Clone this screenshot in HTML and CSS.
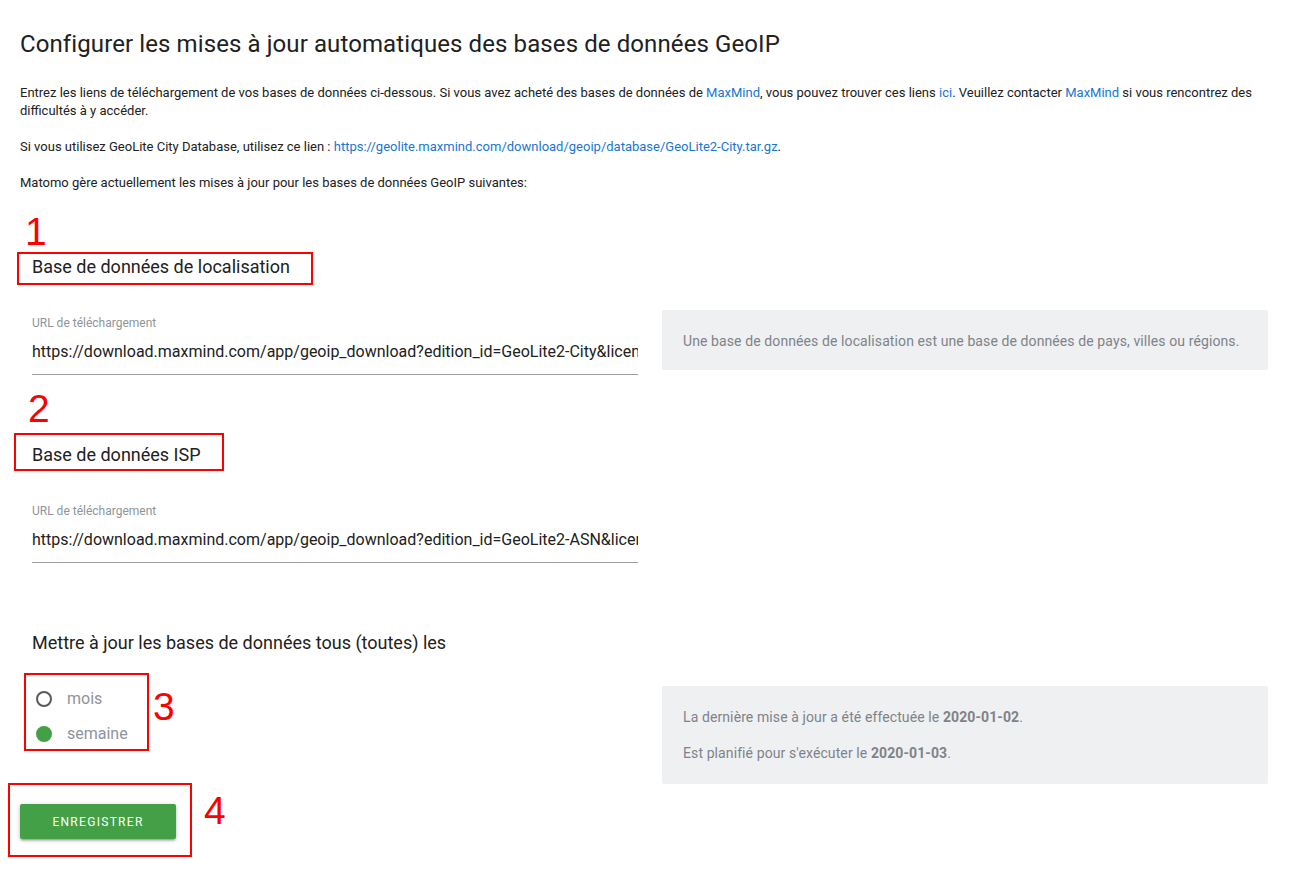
FILE: index.html
```html
<!DOCTYPE html>
<html lang="fr">

<head>
    <meta charset="UTF-8">
    <meta name="viewport" content="width=device-width, initial-scale=1.0">
    <title>GeoIP</title>
    <link rel="stylesheet" href="styles.css">
</head>

<body>
    <div class="page">
        <h2 class="title">Configurer les mises à jour automatiques des bases de données GeoIP</h2>

        <p class="intro">Entrez les liens de téléchargement de vos bases de données ci-dessous. Si vous avez acheté des bases de données de <a href="#">MaxMind</a>, vous pouvez trouver ces liens <a href="#">ici</a>. Veuillez contacter <a href="#">MaxMind</a> si vous rencontrez des difficultés à y accéder.</p>
        <p class="intro">Si vous utilisez GeoLite City Database, utilisez ce lien : <a href="#">https://geolite.maxmind.com/download/geoip/database/GeoLite2-City.tar.gz</a>.</p>
        <p class="intro">Matomo gère actuellement les mises à jour pour les bases de données GeoIP suivantes:</p>

        <h3 class="section first">Base de données de localisation</h3>
        <div class="row row-loc">
            <div class="col">
                <label class="field-label">URL de téléchargement</label>
                <input class="field-input" type="text" value="https://download.maxmind.com/app/geoip_download?edition_id=GeoLite2-City&amp;license_key=YOUR_LICENSE_KEY&amp;suffix=tar.gz">
            </div>
            <div class="col">
                <div class="help">Une base de données de localisation est une base de données de pays, villes ou régions.</div>
            </div>
        </div>

        <h3 class="section">Base de données ISP</h3>
        <div class="row">
            <div class="col">
                <label class="field-label">URL de téléchargement</label>
                <input class="field-input" type="text" value="https://download.maxmind.com/app/geoip_download?edition_id=GeoLite2-ASN&amp;license_key=YOUR_LICENSE_KEY&amp;suffix=tar.gz">
            </div>
            <div class="col"></div>
        </div>

        <h3 class="section">Mettre à jour les bases de données tous (toutes) les</h3>
        <div class="row row-period">
            <div class="col">
                <label class="radio"><span class="dot"></span>mois</label>
                <label class="radio"><span class="dot checked"></span>semaine</label>
            </div>
            <div class="col">
                <div class="help help-dates">
                    <p>La dernière mise à jour a été effectuée le <b>2020-01-02</b>.</p>
                    <p>Est planifié pour s'exécuter le <b>2020-01-03</b>.</p>
                </div>
            </div>
        </div>

        <button class="btn">ENREGISTRER</button>

        <!-- annotations -->
        <div class="mark mark-box box1"></div>
        <div class="mark num num1">1</div>
        <div class="mark mark-box box2"></div>
        <div class="mark num num2">2</div>
        <div class="mark mark-box box3"></div>
        <div class="mark num num3">3</div>
        <div class="mark mark-box box4"></div>
        <div class="mark num num4">4</div>
    </div>
</body>

</html>
```

FILE: styles.css
```css
body {
    margin: 0;
    background: #fff;
    font-family: Roboto, "Liberation Sans", Arial, sans-serif;
    color: #212121;
}

.page {
    position: relative;
    padding: 29px 20px 40px;
    height: 807px;
}

.title {
    margin: 0 0 25px;
    font-size: 24px;
    line-height: 30px;
    font-weight: 400;
    letter-spacing: 0.1px;
}

.intro {
    margin: 0 0 18px;
    font-size: 13px;
    line-height: 18px;
}

.intro a {
    color: #1976d2;
    text-decoration: none;
}

.section {
    margin: 68px 0 0;
    padding: 0 12px;
    font-size: 18px;
    line-height: 24px;
    font-weight: 400;
}

.section.first {
    margin-top: 63px;
}

.row {
    display: grid;
    grid-template-columns: 1fr 1fr;
    margin-top: 31px;
}

.row-period {
    margin-top: 31px;
}

.col {
    padding: 0 12px;
    min-width: 0;
}

.row .col:first-child {
    padding-top: 5px;
}

.row-period .col:first-child {
    padding-top: 0;
}

.field-label {
    display: block;
    font-size: 12px;
    line-height: 16px;
    color: #8e949a;
    margin-bottom: 8px;
}

.field-input {
    display: block;
    width: 100%;
    box-sizing: border-box;
    height: 36px;
    padding: 0 0 11px;
    border: none;
    border-bottom: 1px solid #9e9e9e;
    outline: none;
    font-family: inherit;
    font-size: 16px;
    color: #212121;
    background: transparent;
}

.help {
    background: #eff0f1;
    border-radius: 2px;
    padding: 21px 21px 19px;
    font-size: 14px;
    line-height: 20px;
    letter-spacing: 0.1px;
    color: #7e8389;
}

.help-dates {
    padding-bottom: 21px;
}

.help-dates p {
    margin: 0 0 16px;
}

.help-dates p:last-child {
    margin-bottom: 0;
}

.radio {
    display: flex;
    align-items: center;
    height: 25px;
    margin-bottom: 10px;
    font-size: 16px;
    color: #8f949b;
}

.dot {
    width: 16px;
    height: 16px;
    box-sizing: border-box;
    border: 2px solid #5a5a5a;
    border-radius: 50%;
    margin: 0 15px 0 4px;
}

.dot.checked {
    border-color: #43a047;
    background: #43a047;
}

.btn {
    display: block;
    margin-top: 20px;
    width: 156px;
    height: 35px;
    border: none;
    border-radius: 2px;
    background: #43a047;
    color: #fff;
    font-family: inherit;
    font-size: 12px;
    letter-spacing: 1.3px;
    box-shadow: 0 2px 2px rgba(0, 0, 0, .14), 0 3px 1px -2px rgba(0, 0, 0, .12), 0 1px 5px rgba(0, 0, 0, .2);
}

/* red annotations drawn over the page */
.mark {
    position: absolute;
}

.mark-box {
    border: 2px solid #f00;
    box-sizing: border-box;
}

.num {
    color: #f00;
    font-family: "Liberation Sans", Arial, sans-serif;
    font-size: 39px;
    line-height: 40px;
}

.box1 { left: 17px; top: 252px; width: 296px; height: 33px; }
.num1 { left: 25px; top: 212px; }
.box2 { left: 14px; top: 433px; width: 210px; height: 38px; }
.num2 { left: 28px; top: 389px; }
.box3 { left: 24px; top: 673px; width: 125px; height: 78px; }
.num3 { left: 153px; top: 687px; }
.box4 { left: 8px; top: 783px; width: 184px; height: 74px; }
.num4 { left: 204px; top: 791px; }
```
